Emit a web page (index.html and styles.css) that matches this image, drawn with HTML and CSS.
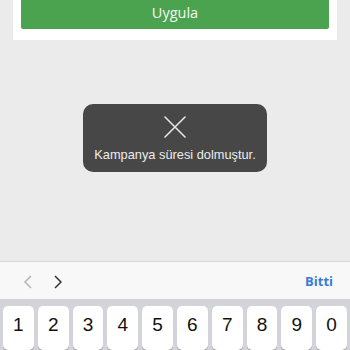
FILE: index.html
```html
<!DOCTYPE html>
<html>
<head>
<meta charset="utf-8">
<link rel="stylesheet" href="styles.css">
</head>
<body>
<div class="screen">
  <div class="content">
    <div class="card">
      <button class="apply">Uygula</button>
    </div>
    <div class="stage">
      <div class="toast">
        <svg class="toast-icon" width="22" height="22" viewBox="0 0 22 22">
          <path d="M1 1 L21 21 M21 1 L1 21" stroke="#e6e6e6" stroke-width="1.6" fill="none" stroke-linecap="round"/>
        </svg>
        <div class="toast-text">Kampanya süresi dolmuştur.</div>
      </div>
    </div>
  </div>
  <div class="toolbar">
    <div class="nav">
      <svg width="8" height="14" viewBox="0 0 8 14"><path d="M7 1 L1 7 L7 13" stroke="#b4b4b4" stroke-width="1.5" fill="none"/></svg>
      <svg width="8" height="14" viewBox="0 0 8 14"><path d="M1 1 L7 7 L1 13" stroke="#333" stroke-width="1.5" fill="none"/></svg>
    </div>
    <span class="done">Bitti</span>
  </div>
  <div class="keyboard">
    <div class="key">1</div><div class="key">2</div><div class="key">3</div><div class="key">4</div><div class="key">5</div><div class="key">6</div><div class="key">7</div><div class="key">8</div><div class="key">9</div><div class="key">0</div>
  </div>
</div>
</body>
</html>
```
FILE: styles.css
```css
html, body { margin: 0; padding: 0; }
body { width: 350px; height: 350px; overflow: hidden; background: #ebebeb; font-family: "Open Sans", "Liberation Sans", sans-serif; }
.screen { display: flex; flex-direction: column; height: 350px; }
.content { height: 262px; display: flex; flex-direction: column; border-bottom: 1px solid #d6d6d6; }
.card { margin: 0 13px; background: #fff; padding: 0 8px 11px; }
.apply { display: block; width: 100%; height: 29px; border: none; background: #4ba34f; color: #f4f8f4; font-family: "Open Sans", sans-serif; font-size: 14.5px; line-height: 20px; padding: 0 0 4px; border-radius: 0 0 2px 2px; }
.stage { display: flex; justify-content: center; padding-top: 64px; }
.toast { width: 184px; height: 68px; background: #474747; border-radius: 10px; display: flex; flex-direction: column; align-items: center; box-sizing: border-box; padding-top: 12px; }
.toast-icon { display: block; }
.toast-text { margin-top: 9px; color: #ececec; font-family: "Liberation Sans", Arial, sans-serif; font-size: 12.8px; line-height: 16px; }
.toolbar { height: 37px; background: #f8f8f8; display: flex; align-items: center; justify-content: space-between; padding: 0 17px 0 24px; }
.nav { display: flex; gap: 22px; align-items: center; padding-top: 2px; }
.nav svg { display: block; }
.done { color: #3a7bd5; font-weight: bold; font-size: 13px; font-family: "Open Sans", sans-serif; }
.keyboard { flex: 1; background: #d2d4d9; display: flex; gap: 4px; padding: 7px 3px 0; }
.key { flex: 1; height: 44px; background: #fff; border-radius: 5px; box-shadow: 0 1px 0 #8e9094; display: flex; justify-content: center; padding-top: 8px; box-sizing: border-box; font-family: "Liberation Sans", Arial, sans-serif; font-size: 19px; color: #111; }
```
